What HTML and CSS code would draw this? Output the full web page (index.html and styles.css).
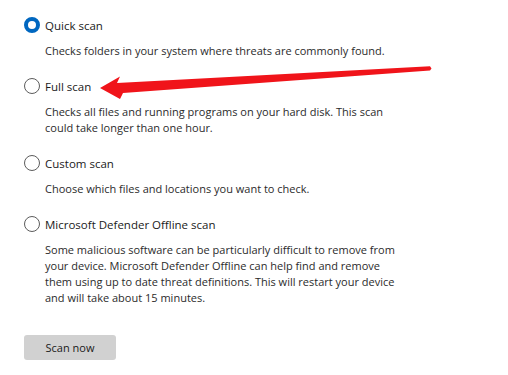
FILE: index.html
```html
<!DOCTYPE html>
<html lang="en">
<head>
  <meta charset="UTF-8">
  <meta name="viewport" content="width=device-width, initial-scale=1.0">
  <title>Scan options</title>
  <link rel="stylesheet" href="styles.css">
</head>
<body>
  <div class="options">
    <div class="option">
      <label class="choice">
        <input type="radio" name="scan" checked>
        <span>Quick scan</span>
      </label>
      <p class="desc">Checks folders in your system where threats are commonly found.</p>
    </div>
    <div class="option">
      <label class="choice">
        <input type="radio" name="scan">
        <span>Full scan</span>
      </label>
      <p class="desc">Checks all files and running programs on your hard disk. This scan could take longer than one hour.</p>
    </div>
    <div class="option">
      <label class="choice">
        <input type="radio" name="scan">
        <span>Custom scan</span>
      </label>
      <p class="desc">Choose which files and locations you want to check.</p>
    </div>
    <div class="option">
      <label class="choice">
        <input type="radio" name="scan">
        <span>Microsoft Defender Offline scan</span>
      </label>
      <p class="desc">Some malicious software can be particularly difficult to remove from your device. Microsoft Defender Offline can help find and remove them using up to date threat definitions. This will restart your device and will take about 15 minutes.</p>
    </div>
    <button class="scan-btn">Scan now</button>
  </div>

  <!-- red annotation arrow pointing at "Full scan" -->
  <svg class="arrow" width="508" height="375" viewBox="0 0 508 375">
    <polygon points="100,88 120,76.5 117,83 430,66.3 431.5,68.4 430,70.5 123,93 120,99" fill="#f0141a"/>
  </svg>
</body>
</html>
```

FILE: styles.css
```css
* {
  box-sizing: border-box;
}
body {
  margin: 0;
  background-color: #fff;
  font-family: 'Open Sans', 'Noto Sans', sans-serif;
  position: relative;
}
.options {
  padding: 15px 24px;
  display: flex;
  flex-direction: column;
}
.option {
  margin-bottom: 17px;
}
.choice {
  display: flex;
  align-items: center;
  gap: 5px;
  height: 20px;
  font-size: 11.5px;
  color: #1a1a1a;
}
.choice input {
  appearance: none;
  -webkit-appearance: none;
  margin: 0;
  width: 16px;
  height: 16px;
  border: 1px solid #5c5c5c;
  border-radius: 50%;
  background-color: #fff;
}
.choice input:checked {
  border: 4.5px solid #0067c0;
  background-color: #fff;
}
.desc {
  margin: 8px 0 0 21px;
  max-width: 355px;
  font-size: 11px;
  line-height: 16px;
  color: #2b2b2b;
}
.scan-btn {
  margin-top: 12px;
  width: 92px;
  height: 25px;
  border: none;
  border-radius: 3px;
  background-color: #d1d1d1;
  color: #1a1a1a;
  font-family: inherit;
  font-size: 11px;
}
.arrow {
  position: absolute;
  top: 0;
  left: 0;
  pointer-events: none;
}
```
